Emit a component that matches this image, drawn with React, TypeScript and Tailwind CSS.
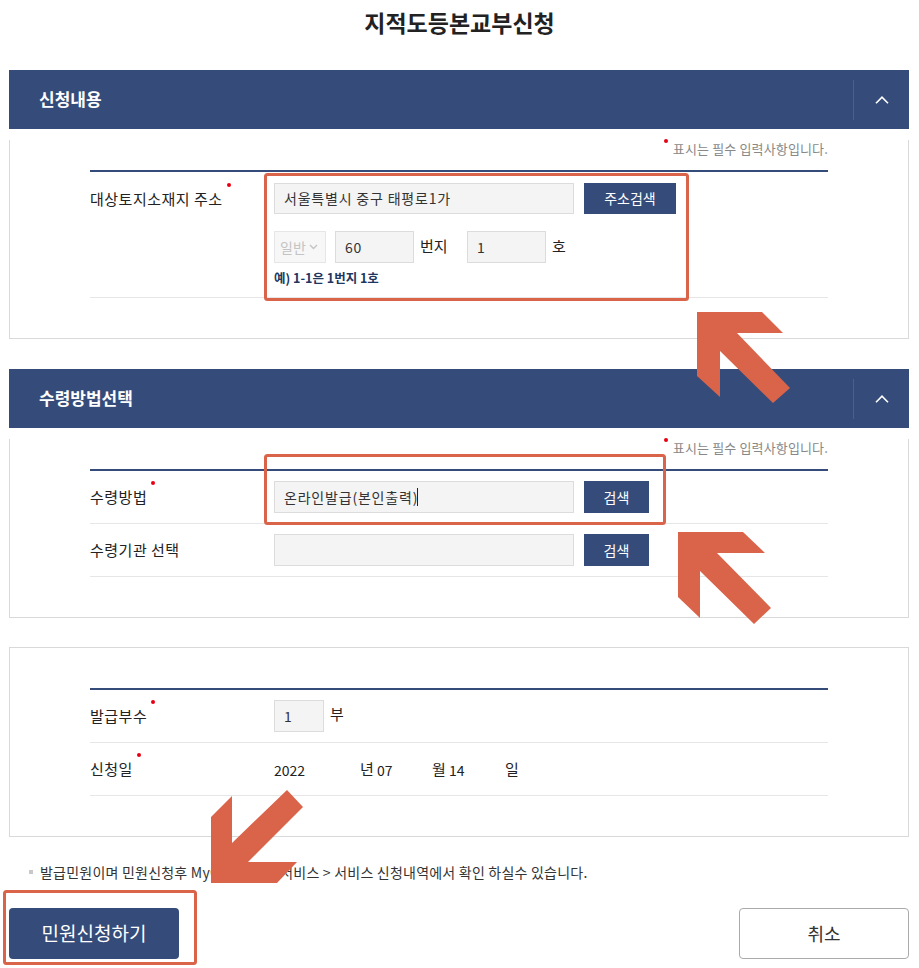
import type { ReactNode } from 'react';

const NAVY = 'bg-[#354c7a]';

function Dot({ className }: { className: string }) {
  return <span className={`absolute w-[4px] h-[4px] rounded-full bg-[#e60012] ${className}`} />;
}

function Label({ text, required }: { text: string; required?: boolean }) {
  return (
    <span className="relative text-[15px] leading-[20px] text-[#222] tracking-[0.5px]">
      {text}
      {required && <Dot className="-right-[8px] -top-[6px]" />}
    </span>
  );
}

function RequiredNote() {
  return (
    <div className="flex justify-end mt-[11px] mb-[13px] h-[17px]">
      <span className="relative text-[13px] leading-[17px] text-[#888] tracking-[0.15px]">
        <Dot className="-left-[9px] -top-[1px]" />
        표시는 필수 입력사항입니다.
      </span>
    </div>
  );
}

function Row({
  label,
  required,
  children,
  className = 'py-[10px]',
}: {
  label: string;
  required?: boolean;
  children: ReactNode;
  className?: string;
}) {
  return (
    <div className={`flex border-b border-[#e6e6e6] ${className}`}>
      <div className="w-[184px] shrink-0 h-[32px] flex items-center">
        <Label text={label} required={required} />
      </div>
      <div className="flex-1">{children}</div>
    </div>
  );
}

function ChevronUp() {
  return (
    <svg width="14" height="8" viewBox="0 0 14 8" fill="none">
      <polyline points="1,7.2 7,1.2 13,7.2" stroke="#fff" strokeWidth="1.6" />
    </svg>
  );
}

function Section({ title, children }: { title: string; children: ReactNode }) {
  return (
    <section>
      <div className={`h-[59px] ${NAVY} flex items-center justify-between pl-[30px]`}>
        <h2 className="text-white text-[17px] font-bold leading-[20px] -mt-[2px]">{title}</h2>
        <div className="h-[40px] w-[56px] border-l border-[#4a6190] flex items-center justify-center">
          <ChevronUp />
        </div>
      </div>
      <div className="border border-t-0 border-[#d9d9d9] px-[80px] pb-[40px]">
        <RequiredNote />
        <div className="border-t-2 border-[#354c7a]">{children}</div>
      </div>
    </section>
  );
}

function TextInput({ value, className, caret }: { value: string; className: string; caret?: boolean }) {
  return (
    <div
      className={`flex items-center bg-[#f4f4f4] border border-[#dcdcdc] pl-[9px] text-[14px] text-[#333] tracking-[0.8px] ${className}`}
    >
      {value}
      {caret && <span className="inline-block w-px h-[18px] bg-[#222] -ml-[0.8px]" />}
    </div>
  );
}

function NavyButton({ children, className }: { children: ReactNode; className: string }) {
  return (
    <button className={`${NAVY} text-white text-[14px] flex items-center justify-center ${className}`}>
      {children}
    </button>
  );
}

// red marks drawn over the form
const arrows = [
  '697,312 762,312 783,333 737,333 790,388 773,403 720,351 720,397 697,376',
  '678,532 743,532 765,553 717,553 771,608 754,624 700,571 700,618 678,597',
  '287,790 303,807 248,862 297,862 277,883 211,883 211,817 232,796 232,843',
];

export default function App() {
  return (
    <div className="relative w-[919px] h-[968px] overflow-hidden bg-white font-['Noto_Sans_CJK_KR','Noto_Sans',sans-serif] text-[#222]">
      <h1 className="h-[44px] flex items-center justify-center text-[23px] font-bold text-[#222]">
        지적도등본교부신청
      </h1>

      <div className="mx-[9px] w-[900px] mt-[26px]">
        <Section title="신청내용">
          <Row label="대상토지소재지 주소" required className="pt-[11px] pb-[11px]">
            <div className="flex gap-[10px]">
              <TextInput value="서울특별시 중구 태평로1가" className="w-[300px] h-[31px]" />
              <NavyButton className="w-[92px] h-[31px]">주소검색</NavyButton>
            </div>
            <div className="flex items-center mt-[17px] h-[32px]">
              <div className="w-[52px] h-[32px] bg-[#f7f7f7] border border-[#e6e6e6] flex items-center pl-[5px] gap-[3px] text-[14px] text-[#c4c4c4]">
                일반
                <svg width="9" height="6" viewBox="0 0 9 6" fill="none">
                  <polyline points="1,1 4.5,4.5 8,1" stroke="#c4c4c4" strokeWidth="1.4" />
                </svg>
              </div>
              <TextInput value="60" className="w-[79px] h-[32px] ml-[9px]" />
              <span className="ml-[6px] w-[47px] text-[15px] -mt-[2px]">번지</span>
              <TextInput value="1" className="w-[79px] h-[32px]" />
              <span className="ml-[6px] text-[15px] -mt-[2px]">호</span>
            </div>
            <p className="mt-[7px] text-[12.5px] leading-[16px] font-bold text-[#1f365f]">예) 1-1은 1번지 1호</p>
          </Row>
        </Section>

        <div className="mt-[30px]">
          <Section title="수령방법선택">
            <Row label="수령방법" required>
              <div className="flex gap-[10px]">
                <TextInput value="온라인발급(본인출력)" caret className="w-[300px] h-[32px]" />
                <NavyButton className="w-[65px] h-[32px]">검색</NavyButton>
              </div>
            </Row>
            <Row label="수령기관 선택">
              <div className="flex gap-[10px]">
                <TextInput value="" className="w-[300px] h-[32px]" />
                <NavyButton className="w-[65px] h-[32px]">검색</NavyButton>
              </div>
            </Row>
          </Section>
        </div>

        <div className="mt-[29px] border border-[#d9d9d9] px-[80px] pt-[40px] pb-[40px]">
          <div className="border-t-2 border-[#354c7a]">
            <Row label="발급부수" required>
              <div className="flex items-center">
                <TextInput value="1" className="w-[50px] h-[32px]" />
                <span className="ml-[6px] text-[15px] -mt-[4px]">부</span>
              </div>
            </Row>
            <Row label="신청일" required>
              <div className="flex items-center h-[32px] text-[14px] text-[#222]">
                <span className="w-[86px] pt-[2px]">2022</span>
                <span className="w-[17px] text-[15px]">년</span>
                <span className="w-[55px] pt-[2px]">07</span>
                <span className="w-[17px] text-[15px]">월</span>
                <span className="w-[56px] pt-[2px]">14</span>
                <span className="text-[15px]">일</span>
              </div>
            </Row>
          </div>
        </div>

        <p className="mt-[26px] h-[18px] flex items-center text-[14px] text-[#333] -ml-[9px] pl-[29px] gap-[7px] tracking-[0.22px]">
          <span className="w-[4px] h-[4px] bg-[#c8c8c8]" />
          발급민원이며 민원신청후 MyGov &gt; 나의 서비스 &gt; 서비스 신청내역에서 확인 하실수 있습니다.
        </p>

        <div className="mt-[27px] flex justify-between">
          <button className={`w-[170px] h-[51px] rounded-[4px] ${NAVY} text-white text-[19px]`}>민원신청하기</button>
          <button className="w-[170px] h-[51px] rounded-[4px] border border-[#aaa] bg-white text-[#333] text-[18px]">
            취소
          </button>
        </div>
      </div>

      <svg className="absolute inset-0 pointer-events-none" width="919" height="968" viewBox="0 0 919 968">
        <g fill="none" stroke="#d9644a" strokeWidth="3">
          <rect x="265.5" y="174.5" width="422" height="125" rx="2" />
          <rect x="265.5" y="455.5" width="399" height="68" rx="2" />
          <rect x="4.5" y="891.5" width="191" height="72" rx="2" />
        </g>
        <g fill="#d9644a">
          {arrows.map((p) => (
            <polygon key={p} points={p} />
          ))}
        </g>
      </svg>
    </div>
  );
}
